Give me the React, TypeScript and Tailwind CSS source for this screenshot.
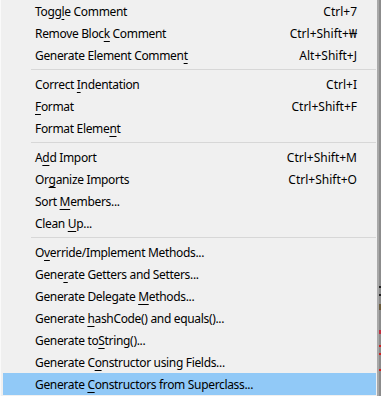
import React from "react";

type Item = { label: string; m: number; shortcut?: string; active?: boolean };
type Group = Item[];

const groups: Group[] = [
  [
    { label: "Toggle Comment", m: 4, shortcut: "Ctrl+7" },
    { label: "Remove Block Comment", m: 11, shortcut: "Ctrl+Shift+₩" },
    { label: "Generate Element Comment", m: 23, shortcut: "Alt+Shift+J" },
  ],
  [
    { label: "Correct Indentation", m: 8, shortcut: "Ctrl+I" },
    { label: "Format", m: 0, shortcut: "Ctrl+Shift+F" },
    { label: "Format Element", m: 12 },
  ],
  [
    { label: "Add Import", m: 1, shortcut: "Ctrl+Shift+M" },
    { label: "Organize Imports", m: 2, shortcut: "Ctrl+Shift+O" },
    { label: "Sort Members...", m: 5 },
    { label: "Clean Up...", m: 6 },
  ],
  [
    { label: "Override/Implement Methods...", m: 1 },
    { label: "Generate Getters and Setters...", m: 4 },
    { label: "Generate Delegate Methods...", m: 18 },
    { label: "Generate hashCode() and equals()...", m: 9 },
    { label: "Generate toString()...", m: 11 },
    { label: "Generate Constructor using Fields...", m: 10 },
    { label: "Generate Constructors from Superclass...", m: 9, active: true },
  ],
];

function Label({ text, m }: { text: string; m: number }) {
  return (
    <span className="tracking-[-0.33px]">
      {text.slice(0, m)}
      <span className="underline underline-offset-[3px]">{text.charAt(m)}</span>
      {text.slice(m + 1)}
    </span>
  );
}

export default function App() {
  return (
    <div
      className="flex w-[381px] h-[396px] overflow-hidden bg-[#f0f0f0] text-[12px] text-black"
      style={{ fontFamily: '"Noto Sans", "Noto Sans CJK KR", sans-serif' }}
    >
      <div className="flex flex-col w-[377px] border-l border-[#fafafa] pl-[2px] pr-px">
        {groups.map((g, gi) => (
          <React.Fragment key={gi}>
            {gi > 0 && (
              <div className="h-[7px] flex flex-col pt-[3px] pl-[28px]">
                <div className="h-px bg-[#d7d7d7]" />
              </div>
            )}
            {g.map((it) => (
              <div
                key={it.label}
                className={`h-[22px] shrink-0 flex items-center justify-between pt-[2px] pl-[32px] pr-[19px] ${
                  it.active ? "bg-[#91c9f7]" : ""
                }`}
              >
                <Label text={it.label} m={it.m} />
                {it.shortcut && <span>{it.shortcut}</span>}
              </div>
            ))}
          </React.Fragment>
        ))}
      </div>
      <div className="w-[2px] bg-[#a8a8a8]" />
      <div className="w-[2px] flex flex-col bg-[#8c8c8c]">
        <div className="h-[286px]" />
        <div className="h-[2px] bg-[#222]" />
        <div className="h-[6px]" />
        <div className="h-[2px] bg-[#222]" />
        <div className="h-[8px]" />
        <div className="h-[6px] bg-[#6a5a3a]" />
        <div className="h-[20px]" />
        <div className="h-[4px] bg-[#c03040]" />
        <div className="h-[11px]" />
        <div className="h-[2px] bg-[#d02020]" />
        <div className="h-[6px]" />
        <div className="h-[2px] bg-[#d02020]" />
        <div className="h-[14px]" />
        <div className="h-[2px] bg-[#d02020]" />
      </div>
    </div>
  );
}
